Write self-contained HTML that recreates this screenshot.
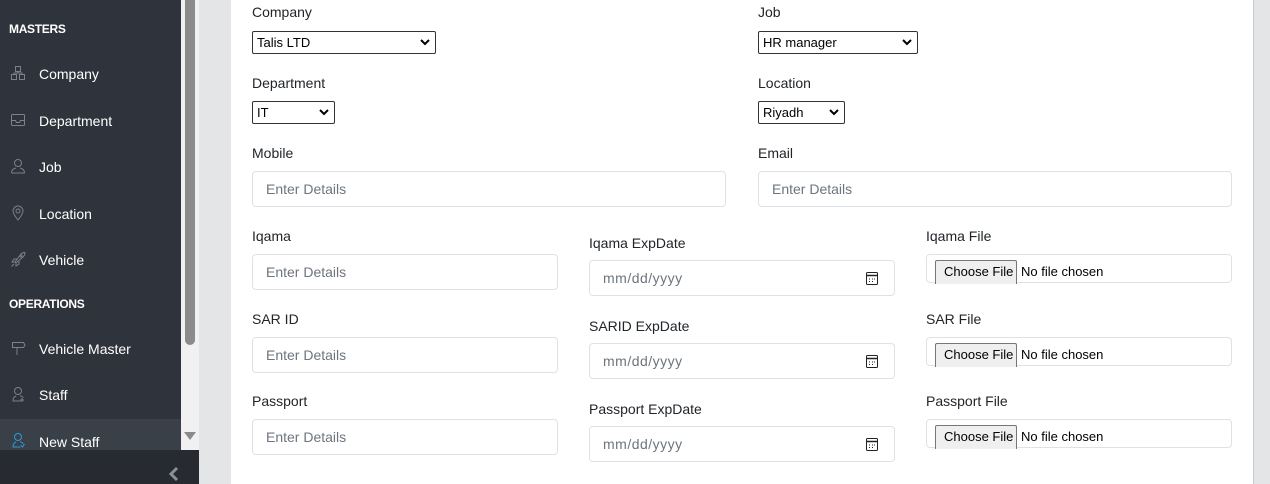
<!DOCTYPE html>
<html><head><meta charset="utf-8"><style>
*{box-sizing:border-box;margin:0;padding:0}
body{width:1270px;height:484px;overflow:hidden;background:#e4e5e7;font-family:"Liberation Sans",sans-serif;font-size:14px;color:#212529;position:relative}
.a{position:absolute}
#side{left:0;top:0;width:181px;height:450px;background:#2f333b}
#sb{left:181px;top:0;width:18px;height:450px;background:#f1f1f1}
#thumb{left:185px;top:0;width:10px;height:345px;background:#8b8b8b;border-radius:0 0 5px 5px}
#bot{left:0;top:450px;width:199px;height:34px;background:#272a30}
.hd{left:9px;color:#fff;font-weight:bold;font-size:12px;letter-spacing:-0.3px}
.it{left:39px;color:#fff;font-size:14px}
.ic{left:10px;width:16px;height:16px}
#card{left:231px;top:0;width:1022px;height:484px;background:#fff}
#rb{left:1253px;top:0;width:1px;height:484px;background:#c9cacc}
.lb{font-size:14px;color:#212529}
.sel{border:1px solid #333;border-radius:2px;height:23px;font-size:13px;padding:3px 4px;color:#000;background:#fff}
.sel svg{position:absolute;right:5px;top:7px}
.inp{border:1px solid #dee2e6;border-radius:4px;height:36px;padding:9px 13px;color:#6c757d;font-size:14px;background:#fff}
.file{border:1px solid #dee2e6;border-radius:4px;height:29px;background:#fff;font-size:13px}
.btn{position:absolute;left:8px;top:5px;height:24px;width:82px;background:#efefef;border:1px solid #767676;border-bottom:none;border-radius:2px 2px 0 0;padding:3px 0 0 8px;color:#000}
.nf{position:absolute;left:94px;top:9px;color:#000}
.cal{position:absolute;right:16px;top:11px}
</style></head><body>
<div class="a" id="side"></div>
<div class="a" style="left:0;top:419px;width:181px;height:31px;background:#3a4048"></div>
<div class="a" id="sb"></div><div class="a" id="thumb"></div>
<div class="a" style="left:184px;top:432px;width:0;height:0;border-left:6px solid transparent;border-right:6px solid transparent;border-top:8px solid #8b8b8b"></div>
<div class="a" id="bot"></div>
<svg class="a" style="left:168px;top:466px" width="12" height="16"><path d="M9 2 L3 8 L9 14" stroke="#8a9099" stroke-width="3" fill="none"/></svg>

<div class="a hd" style="top:22px">MASTERS</div>
<div class="a hd" style="top:297px">OPERATIONS</div>
<svg class="a ic" style="top:65px" viewBox="0 0 16 16" fill="none" stroke="#7a828c" stroke-width="1"><rect x="5.5" y="1.5" width="5" height="5"/><rect x="1.5" y="9.5" width="5" height="5"/><rect x="9.5" y="9.5" width="5" height="5"/><path d="M8 6.5V8M4 9.5V8h8v1.5"/></svg>
<div class="a it" style="top:66px">Company</div>
<svg class="a ic" style="top:112px" viewBox="0 0 16 16" fill="none" stroke="#7a828c"><rect x="1.5" y="2.5" width="13" height="11" rx="1"/><path d="M1.5 8.5h4l1 2h3l1-2h4"/></svg>
<div class="a it" style="top:113px">Department</div>
<svg class="a ic" style="top:158px" viewBox="0 0 16 16" fill="none" stroke="#7a828c"><circle cx="8" cy="5" r="3.5"/><path d="M1.5 15c0-3 2-4.5 4.5-5M14.5 15c0-3-2-4.5-4.5-5M1.5 15h13"/></svg>
<div class="a it" style="top:159px">Job</div>
<svg class="a ic" style="top:205px" viewBox="0 0 16 16" fill="none" stroke="#7a828c"><path d="M8 15C4 10 3 8 3 6a5 5 0 0110 0c0 2-1 4-5 9z"/><circle cx="8" cy="6" r="2"/></svg>
<div class="a it" style="top:206px">Location</div>
<svg class="a ic" style="top:251px" viewBox="0 0 16 16" fill="none" stroke="#7a828c"><path d="M5 11L11 3c1-1 3-1.5 4-1.5 0 1-.5 3-1.5 4L6 12zM5 11l-3 0 2-3h3M6 12v3l3-2V10M4 13l-2.5 2.5"/><circle cx="11" cy="5" r="1"/></svg>
<div class="a it" style="top:252px">Vehicle</div>
<svg class="a ic" style="top:340px" viewBox="0 0 16 16" fill="none" stroke="#7a828c"><path d="M2.5 2.5h11l1.5 2.5-1.5 2.5h-11zM7 7.5V15"/></svg>
<div class="a it" style="top:341px">Vehicle Master</div>
<svg class="a ic" style="top:386px" viewBox="0 0 16 16" fill="none" stroke="#7a828c"><circle cx="8" cy="5" r="3.5"/><path d="M3 15c0-3 1-4 3-5M13 12c0-1-1-2-3-2M2.5 15h8M12 12v4M10 14h4"/></svg>
<div class="a it" style="top:387px">Staff</div>
<svg class="a ic" style="top:432px" viewBox="0 0 16 16" fill="none" stroke="#2b9bd8"><circle cx="8" cy="5" r="3.5"/><path d="M3 15c0-3 1-4 3-5M13 12c0-1-1-2-3-2M2.5 15h8M11 13l1.5 2 2-3"/></svg>
<div class="a it" style="top:434px">New Staff</div>

<div class="a" id="card"></div><div class="a" id="rb"></div>

<div class="a lb" style="left:252px;top:4px">Company</div>
<div class="a sel" style="left:252px;top:31px;width:184px">Talis LTD<svg width="10" height="7"><path d="M1 1l4 4 4-4" stroke="#000" stroke-width="2" fill="none"/></svg></div>
<div class="a lb" style="left:758px;top:4px">Job</div>
<div class="a sel" style="left:758px;top:31px;width:160px">HR manager<svg width="10" height="7"><path d="M1 1l4 4 4-4" stroke="#000" stroke-width="2" fill="none"/></svg></div>
<div class="a lb" style="left:252px;top:75px">Department</div>
<div class="a sel" style="left:252px;top:101px;width:83px">IT<svg width="10" height="7"><path d="M1 1l4 4 4-4" stroke="#000" stroke-width="2" fill="none"/></svg></div>
<div class="a lb" style="left:758px;top:75px">Location</div>
<div class="a sel" style="left:758px;top:101px;width:87px">Riyadh<svg width="10" height="7"><path d="M1 1l4 4 4-4" stroke="#000" stroke-width="2" fill="none"/></svg></div>

<div class="a lb" style="left:252px;top:145px">Mobile</div>
<div class="a inp" style="left:252px;top:171px;width:474px">Enter Details</div>
<div class="a lb" style="left:758px;top:145px">Email</div>
<div class="a inp" style="left:758px;top:171px;width:474px">Enter Details</div>

<div class="a lb" style="left:252px;top:228px">Iqama</div>
<div class="a inp" style="left:252px;top:254px;width:306px">Enter Details</div>
<div class="a lb" style="left:252px;top:311px">SAR ID</div>
<div class="a inp" style="left:252px;top:337px;width:306px">Enter Details</div>
<div class="a lb" style="left:252px;top:393px">Passport</div>
<div class="a inp" style="left:252px;top:419px;width:306px">Enter Details</div>

<div class="a lb" style="left:589px;top:235px">Iqama ExpDate</div>
<div class="a inp" style="left:589px;top:260px;width:306px;letter-spacing:0.5px">mm/dd/yyyy<svg class="cal" width="12" height="13"><rect x="0.5" y="0.5" width="11" height="12" rx="1" fill="none" stroke="#222"/><path d="M1 3.5h10" stroke="#222" stroke-width="1.5"/><path d="M3 7h1M6 7h1M9 7h-1M3 9.5h1M6 9.5h1" stroke="#222"/></svg></div>
<div class="a lb" style="left:589px;top:318px">SARID ExpDate</div>
<div class="a inp" style="left:589px;top:343px;width:306px;letter-spacing:0.5px">mm/dd/yyyy<svg class="cal" width="12" height="13"><rect x="0.5" y="0.5" width="11" height="12" rx="1" fill="none" stroke="#222"/><path d="M1 3.5h10" stroke="#222" stroke-width="1.5"/><path d="M3 7h1M6 7h1M9 7h-1M3 9.5h1M6 9.5h1" stroke="#222"/></svg></div>
<div class="a lb" style="left:589px;top:401px">Passport ExpDate</div>
<div class="a inp" style="left:589px;top:426px;width:306px;letter-spacing:0.5px">mm/dd/yyyy<svg class="cal" width="12" height="13"><rect x="0.5" y="0.5" width="11" height="12" rx="1" fill="none" stroke="#222"/><path d="M1 3.5h10" stroke="#222" stroke-width="1.5"/><path d="M3 7h1M6 7h1M9 7h-1M3 9.5h1M6 9.5h1" stroke="#222"/></svg></div>

<div class="a lb" style="left:926px;top:228px">Iqama File</div>
<div class="a file" style="left:926px;top:254px;width:306px"><div class="btn">Choose File</div><div class="nf">No file chosen</div></div>
<div class="a lb" style="left:926px;top:311px">SAR File</div>
<div class="a file" style="left:926px;top:337px;width:306px"><div class="btn">Choose File</div><div class="nf">No file chosen</div></div>
<div class="a lb" style="left:926px;top:393px">Passport File</div>
<div class="a file" style="left:926px;top:419px;width:306px"><div class="btn">Choose File</div><div class="nf">No file chosen</div></div>
</body></html>
